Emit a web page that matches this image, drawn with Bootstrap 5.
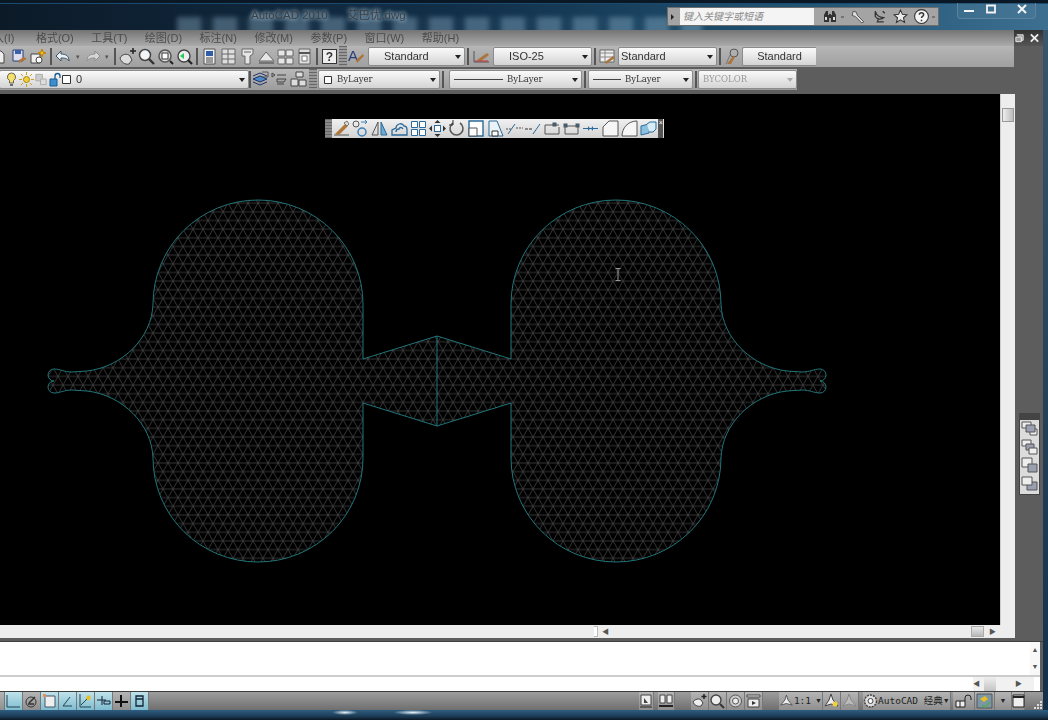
<!DOCTYPE html>
<html lang="en">
<head>
<meta charset="UTF-8">
<title>AutoCAD 2010</title>
<link href="https://cdn.jsdelivr.net/npm/bootstrap@5.3.0/dist/css/bootstrap.min.css" rel="stylesheet">
<style>
html,body{margin:0;height:720px;overflow:hidden;background:#10263a}
svg{display:block}
.app{width:1048px;height:720px;font-family:"Liberation Sans","Noto Sans CJK SC",sans-serif;filter:blur(.35px)}
.glass{height:30px;background:linear-gradient(90deg,#0c1a28 0,#12304a 45%,#1f5272 75%,#3d6f90 100%);border-top:3px solid #0a1724;box-shadow:inset 0 1px 0 #1c4a6c}
.ghost{left:177px;top:14px;width:525px;height:20px;background:repeating-linear-gradient(90deg,rgba(170,205,228,.34) 0 24px,rgba(170,205,228,.05) 24px 36px);filter:blur(2.5px)}
.doc-title{left:251px;top:4px;font-size:11.5px;color:#3a4046;text-shadow:0 0 4px #a8c0d0,0 0 4px #a8c0d0;white-space:pre}
.infobar{left:667px;top:4px;width:272px;height:19px;background:#a4a4a4;border:1px solid #6d6d6d}
.infobar svg{flex:none}
.infofield{width:149px;height:17px;background:#f4f4f4;font-size:10px;font-style:italic;color:#8b8b8b;line-height:17px;padding-left:3px;margin-left:4px}
.winbtns{left:957px;top:-3px;width:79px;height:19px;border:1px solid #5d829b;border-top:0;border-radius:0 0 4px 4px;background:rgba(150,185,205,.1)}
.win-a{margin-left:5px}
.win-b{margin-left:10px}
.win-c{margin-left:19px}
.shell{height:680px}
.stage{width:1043px}
.rim{width:5px;background:linear-gradient(#37566b,#12304a)}
.menubar{height:16px;background:linear-gradient(#747474,#ababab);font-size:11px;line-height:16px;color:#4c4c4c;gap:17.5px;white-space:nowrap}
.menu-first{margin-left:-7px;margin-right:4px}
.tools{height:21px;background:linear-gradient(#b6b6b6,#a0a0a0);white-space:nowrap}
.toolsb{height:27px;background:#5d5d5d;padding:2px 0 4px}
.rowfill{height:21px;background:linear-gradient(#b8b8b8,#9c9c9c)}
.slot{width:19px;height:19px;flex:none}
.slot-cut{margin-left:-9px}
.slot-n{width:10px;height:19px;flex:none;font-size:7px;line-height:19px;color:#555;text-align:center}
.sep{width:2px;height:17px;flex:none;background:#eee;border:0 solid #555;border-width:0 1px;margin:0 2px}
.sep-tight{margin:0}
.grip{width:8px;height:21px;flex:none;background:repeating-linear-gradient(#666 0 1px,#999 1px 3px)}
.grip-b{margin:0 1px}
.gap-l2{margin-left:2px}
.gap-l1{margin-left:1px}
.combo{height:19px;flex:none;background:linear-gradient(#fafafa,#d4d4d4);border:1px solid #8b8b8b;border-radius:2px;font-size:11px;line-height:17px;color:#333;overflow:hidden}
.combo i{flex:none;width:0;height:0;border:3.5px solid transparent;border-top:4px solid #222;border-bottom:0;margin-right:3px}
.pad-16{padding-left:15px}
.pad-2{padding-left:2px}
.cw-97{width:97px}
.cw-99{width:99px}
.cw-74{width:74px;border-right:0;border-radius:2px 0 0 2px}
.cw-250{width:250px;margin-left:-1px}
.cw-122{width:122px}
.cw-133{width:133px;margin-left:3px}
.cw-105{width:105px}
.cw-off{width:99px;margin-left:-1px;color:#999}
.cw-off i{border-top-color:#aaa}
.serif{font-family:"DejaVu Serif","Noto Sans CJK SC",serif;font-size:8.5px}
.fade{left:816px;top:0;width:198px;height:37px}
.fade-a{height:16px;background:linear-gradient(90deg,#6a6a6a,#333 18%,#3a3a3a)}
.fade-b{height:21px;background:linear-gradient(90deg,#bcbcbc,#5d5d5d 40%)}
.shade-r{left:1014px;top:0;width:29px;height:16px;background:linear-gradient(#333,#555);padding-right:3px}
.shade-s{left:1014px;top:16px;width:29px;height:48px;background:#5d5d5d}
.main-h{height:531px}
.cad{width:1000px;background:#000}
.vbar{width:15px;background:#ededed;border-left:1px solid #ccc}
.side{width:28px;background:#5d5d5d}
.vthumb{width:12px;height:14px;margin:14px auto 0;background:linear-gradient(90deg,#eee,#bbb);border:1px solid #999}
.float-bar{left:325px;top:25px;width:339px;height:19px;background:linear-gradient(#f0f0f0,#d4d4d4)}
.float-grip{width:7px;background:repeating-linear-gradient(#666 0 1px,#888 1px 3px)}
.float-x{width:5px;background:#555;color:#fff;font-size:7px;line-height:8px}
.float-bar .slot{width:19.2px}
.hbar{height:13px;width:1015px;background:#ededed}
.hgap{width:594px}
.hthumb{width:13px;height:11px;background:linear-gradient(#e8e8e8,#b8b8b8);border:1px solid #aaa}
.tabcap{width:4px;height:11px;background:#fff;border:1px solid #bbb;border-left:0}
.tri{font-size:7px;color:#555;line-height:13px}
.tri-end{margin:0 19px 0 5px}
.divline{height:4px;background:#5d5d5d;border-bottom:1px solid #3f3f3f;width:1043px}
.cmd{height:33px;background:#fff;border-right:3px solid #5d5d5d}
.cmdscroll{width:10px;background:#f8f8f8;font-size:7px;color:#555;line-height:16px}
.cmdline{height:2px;background:#ccc;border-right:3px solid #5d5d5d}
.cmdin{height:14px;background:#fff;border-right:3px solid #5d5d5d}
.cmdtrack{width:61px;margin-right:6px;background:#f1f1f1;font-size:7px;color:#555;line-height:14px;padding:0 12px 0 0}
.cmdthumb{width:12px;height:14px;margin:0 auto 0 4px;background:linear-gradient(#eee,#c4c4c4)}
.stat{height:19px;background:linear-gradient(#9d9d9d,#6f6f6f);border-top:1px solid #3c3c3c;font-size:10px;color:#222;white-space:nowrap}
.sb{width:18px;height:18px;flex:none;background:linear-gradient(#b5b5b5,#8f8f8f);border-right:1px solid #777}
.sb-on{background:linear-gradient(#bfe2ea,#7fbccf)}
.sb-5{width:5px}
.sb-13{width:13px}
.sb-15{width:15px}
.sb-17{width:17px}
.sb-20{width:20px}
.sb-22{width:22px;margin-left:2px}
.sb-44{width:44px;margin-left:16px}
.sb-88{width:88px;margin-left:4px}
.gap-16{margin-left:16px}
.mini{font-size:7px}
.grippy{width:18px;height:18px}
.mono{font-family:"DejaVu Sans Mono","Noto Sans CJK SC",monospace;font-size:9.5px;color:#1e1e1e}
.floor{height:10px;background:linear-gradient(#2e5d80,#1d3d58 60%,#0a1724);width:1048px}
.glare{left:332px;top:0;width:26px;height:5px;background:radial-gradient(ellipse,#e6f2f8 0,rgba(230,242,248,0) 70%)}
.glare-b{left:393px;width:40px}
.order{margin-top:319px;margin-left:4px;width:21px;height:82px;background:#dcdcdc;border:1px solid #444;border-top:7px solid #444}
.order .slot{height:18px}
</style>
</head>
<body>
<div class="app d-flex flex-column">
  <!-- title bar -->
  <div class="glass position-relative overflow-hidden">
    <div class="ghost position-absolute"></div>
    <div class="doc-title position-absolute">AutoCAD 2010      艾巴优.dwg</div>
    <div class="infobar position-absolute d-flex align-items-center">
      <svg width="8" height="12" viewBox="0 0 8 12"><path d="M3 3l3 3-3 3z" fill="#222"/></svg>
      <div class="infofield">键入关键字或短语</div>
      <svg class="ms-2" width="16" height="16" viewBox="0 0 16 16" fill="#333"><path d="M2 6l2-4h2v4h1v-1h2v1h1V2h2l2 4v7h-5V9H7v4H2z"/><path d="M3 8h2v3H3zM11 8h2v3h-2z" fill="#ddd"/></svg>
      <svg width="8" height="8" viewBox="0 0 8 8"><path d="M3 4h3" stroke="#444"/></svg>
      <svg class="ms-1" width="17" height="17" viewBox="0 0 16 16"><path d="M3 3l3 1 1 3 6 6-2 1-6-6-3-1z" fill="#ddd" stroke="#444" stroke-width=".8"/></svg>
      <svg class="ms-1" width="17" height="17" viewBox="0 0 16 16" fill="none" stroke="#333" stroke-width="1.2"><path d="M4 3c1 4 4 6 8 6-2 2-6 2-8-1zM7 10l-1 3h6M11 3l2 2"/></svg>
      <svg class="ms-1" width="17" height="17" viewBox="0 0 16 16"><path d="M8 2l1.800 4 4.200.4-3.200 2.800 1 4.300L8 11.200 4.200 13.500l1-4.300L2 6.400 6.200 6z" fill="#ececec" stroke="#333"/></svg>
      <svg class="ms-1" width="17" height="17" viewBox="0 0 16 16"><circle cx="8" cy="8" r="6.500" fill="#f4f4f4" stroke="#333"/><path d="M6 6.300c0-2.300 4-2.300 4 0 0 1.600-2 1.500-2 3M8 11v1.400" fill="none" stroke="#333" stroke-width="1.400"/></svg>
      <svg width="8" height="8" viewBox="0 0 8 8"><path d="M2 4h3" stroke="#444"/></svg>
    </div>
    <div class="winbtns position-absolute d-flex align-items-center">
      <svg class="win-a" width="12" height="10" viewBox="0 0 12 10"><path d="M1 6h10v2H1z" fill="#f4f4f4"/></svg>
      <svg class="win-b" width="12" height="10" viewBox="0 0 12 10"><path d="M2 1.500h8v7H2z" fill="none" stroke="#f4f4f4" stroke-width="1.800"/></svg>
      <svg class="win-c" width="12" height="10" viewBox="0 0 12 10"><path d="M2 1l8 8M10 1L2 9" stroke="#f4f4f4" stroke-width="2"/></svg>
    </div>
  </div>

  <div class="shell d-flex">
    <div class="stage d-flex flex-column">
      <div class="position-relative">
        <!-- menu -->
        <div class="menubar d-flex overflow-hidden">
          <span class="menu-first">入(I)</span><span>格式(O)</span><span>工具(T)</span><span>绘图(D)</span><span>标注(N)</span><span>修改(M)</span><span>参数(P)</span><span>窗口(W)</span><span>帮助(H)</span>
        </div>
        <!-- standard + styles toolbar -->
        <div class="tools d-flex align-items-center overflow-hidden">
          <div class="slot slot-cut"><svg width="19" height="19" viewBox="0 0 19 19"><path d="M2 4h8l3 3v9H2z" fill="#eee" stroke="#444"/></svg></div>
          <div class="slot"><svg width="19" height="19" viewBox="0 0 19 19"><path d="M3 3h10v11H3z" fill="#dde" stroke="#26407a"/><path d="M5 3h6v4H5z" fill="#3b62a8"/><path d="M9 16l8-4-3-2-5 3z" fill="#b0763a"/></svg></div>
          <div class="slot"><svg width="19" height="19" viewBox="0 0 19 19" fill="none" stroke="#444"><path d="M2 7h9v9H2z" fill="#eee"/><circle cx="10" cy="13" r="3" fill="#fff"/><path d="M13 2l1 3 3 1-3 1-1 3-1-3-3-1 3-1z" fill="#f0c020" stroke="#c08000"/></svg></div>
          <div class="sep"></div>
          <div class="slot"><svg width="19" height="19" viewBox="0 0 19 19"><path d="M7 4L2 9l5 5v-3c3 0 6 0 8 3 0-5-3-7-8-7z" fill="#e8eef4" stroke="#3a5266"/></svg></div>
          <div class="slot-n">▾</div>
          <div class="slot"><svg width="19" height="19" viewBox="0 0 19 19"><path d="M12 4l5 5-5 5v-3c-3 0-6 0-8 3 0-5 3-7 8-7z" fill="#d6d6d6" stroke="#8b8b8b"/></svg></div>
          <div class="slot-n">▾</div>
          <div class="sep"></div>
          <div class="slot"><svg width="19" height="19" viewBox="0 0 19 19"><path d="M2 11c2-4 7-5 10-2l2 4-3 4c-4 1-8-2-9-6z" fill="#ddd" stroke="#444"/><path d="M15 1v6M12 4h6" stroke="#222" stroke-width="1.500"/></svg></div>
          <div class="slot"><svg width="19" height="19" viewBox="0 0 19 19"><circle cx="8" cy="8" r="5.500" fill="#f1f5f8" stroke="#444" stroke-width="1.500"/><path d="M12 12l5 5" stroke="#333" stroke-width="2.400"/></svg></div>
          <div class="slot"><svg width="19" height="19" viewBox="0 0 19 19"><circle cx="9" cy="9" r="6" fill="#ddd" stroke="#555" stroke-width="1.500"/><rect x="6" y="6" width="6" height="6" fill="#fff" stroke="#333"/><path d="M14 14l3 3" stroke="#222" stroke-width="2"/></svg></div>
          <div class="slot"><svg width="19" height="19" viewBox="0 0 19 19"><circle cx="9" cy="9" r="6" fill="#eee" stroke="#444" stroke-width="1.400"/><path d="M13 13l4 4" stroke="#222" stroke-width="2.200"/><path d="M5 9l4-3v6z" fill="#2c5"/></svg></div>
          <div class="sep"></div>
          <div class="slot"><svg width="19" height="19" viewBox="0 0 19 19"><path d="M4 2h11v15H4z" fill="#eee" stroke="#555"/><path d="M6 4h7v5H6z" fill="#2d5da8"/><path d="M6 11h7M6 13h7M6 15h7" stroke="#444"/></svg></div>
          <div class="slot"><svg width="19" height="19" viewBox="0 0 19 19"><path d="M3 2h13v15H3z" fill="#ddd" stroke="#666"/><path d="M3 7h13M3 12h13M9 2v15" stroke="#666"/></svg></div>
          <div class="slot"><svg width="19" height="19" viewBox="0 0 19 19"><path d="M4 2h11v5l-3 2v8H7V9H4z" fill="#e6e6e6" stroke="#666"/><path d="M6 5h7" stroke="#666"/></svg></div>
          <div class="slot"><svg width="19" height="19" viewBox="0 0 19 19"><path d="M2 14l7-9 8 9z" fill="#e6e6e6" stroke="#666"/><path d="M2 16h15" stroke="#666" stroke-width="1.500"/></svg></div>
          <div class="slot"><svg width="19" height="19" viewBox="0 0 19 19" fill="#e6e6e6" stroke="#666"><path d="M2 3h7v6H2zM10 3h7v6h-7zM2 11h7v6H2zM10 11h7v6h-7z"/></svg></div>
          <div class="slot"><svg width="19" height="19" viewBox="0 0 19 19"><path d="M4 2h11v15H4z" fill="#ddd" stroke="#666"/><path d="M4 6h11" stroke="#555" stroke-width="2"/><path d="M7 9h5v5H7z" fill="#fff" stroke="#777"/></svg></div>
          <div class="sep"></div>
          <div class="slot"><svg width="19" height="19" viewBox="0 0 19 19"><rect x="2.500" y="2.500" width="14" height="14" fill="#eee" stroke="#333"/><text x="9.500" y="14" text-anchor="middle" font-size="12" font-family="Liberation Sans" font-weight="700" fill="#333">?</text></svg></div>
          <div class="grip"></div>
          <div class="slot"><svg width="19" height="19" viewBox="0 0 19 19"><text x="1" y="14" font-size="15" font-family="Liberation Sans" fill="#2a3f7a">A</text><path d="M10 16l7-7-1-2-7 6z" fill="#a9743d"/></svg></div>
          <div class="combo cw-97 gap-l2 d-flex align-items-center"><span class="flex-grow-1 pad-16">Standard</span><i></i></div>
          <div class="sep"></div>
          <div class="slot gap-l1"><svg width="19" height="19" viewBox="0 0 19 19"><path d="M2 4v11h15" fill="none" stroke="#555"/><path d="M5 13l10-7 2 2-8 6z" fill="#a9743d"/><path d="M3 14h13" stroke="#c33"/></svg></div>
          <div class="combo cw-99 gap-l2 d-flex align-items-center"><span class="flex-grow-1 pad-16">ISO-25</span><i></i></div>
          <div class="sep"></div>
          <div class="slot"><svg width="19" height="19" viewBox="0 0 19 19"><path d="M2 3h14v12H2z" fill="#eee" stroke="#666"/><path d="M2 6h14M7 3v12M2 10h14" stroke="#888"/><path d="M8 17l9-6-2-2-8 6z" fill="#a9743d"/></svg></div>
          <div class="combo cw-99 gap-l1 d-flex align-items-center"><span class="flex-grow-1 pad-2">Standard</span><i></i></div>
          <div class="sep"></div>
          <div class="slot"><svg width="19" height="19" viewBox="0 0 19 19"><circle cx="11" cy="6" r="4" fill="none" stroke="#555"/><path d="M4 17l6-8 2 1-4 7z" fill="#a9743d"/><path d="M3 17l4-9" stroke="#777"/></svg></div>
          <div class="combo cw-74 text-center">Standard</div>
        </div>
        <div class="fade position-absolute d-flex flex-column"><div class="fade-a"></div><div class="fade-b"></div></div>
        <div class="shade-r position-absolute d-flex justify-content-end align-items-center">
          <svg width="12" height="12" viewBox="0 0 12 12"><path d="M3 2.500h7v6H8M2 5h6v5H2z" fill="#999" stroke="#eee"/></svg>
          <svg class="ms-1" width="12" height="12" viewBox="0 0 12 12"><path d="M2 2l8 8M10 2l-8 8" stroke="#eee" stroke-width="2"/></svg>
        </div>
        <div class="shade-s position-absolute"></div>
        <!-- layer toolbar -->
        <div class="toolsb d-flex">
          <div class="rowfill d-flex align-items-center">
            <div class="combo cw-250 d-flex align-items-center">
              <svg class="ms-1" width="15" height="15" viewBox="0 0 15 15"><path d="M7.500 1a4 4 0 0 0-2 7.500V11h4V8.500a4 4 0 0 0-2-7.500z" fill="#f4e06a" stroke="#665"/><path d="M6 13h3" stroke="#444" stroke-width="1.500"/></svg>
              <svg width="15" height="15" viewBox="0 0 15 15"><circle cx="7.500" cy="7.500" r="3" fill="#f2d040" stroke="#a80"/><path d="M7.500 0v3M7.500 12v3M0 7.500h3M12 7.500h3M2 2l2 2M11 11l2 2M13 2l-2 2M4 11l-2 2" stroke="#c8a020"/></svg>
              <svg width="14" height="15" viewBox="0 0 15 15"><path d="M2 2h7v7H2z" fill="#ccc" stroke="#aaa"/><path d="M7 7h6v6H7z" fill="#ddd" stroke="#aaa"/></svg>
              <svg width="13" height="15" viewBox="0 0 13 15"><path d="M2 7h7v7H2z" fill="#3a8fd0" stroke="#1a5a90"/><path d="M7 7V4a2.500 2.500 0 0 1 5 0v2" fill="none" stroke="#1a5a90" stroke-width="1.300"/></svg>
              <svg width="11" height="15" viewBox="0 0 11 15"><path d="M1.500 3.500h8v8h-8z" fill="#fff" stroke="#333"/></svg>
              <span class="flex-grow-1 ms-1">0</span><i></i>
            </div>
            <div class="sep sep-tight"></div>
            <div class="slot"><svg width="19" height="19" viewBox="0 0 19 19"><path d="M2 9l7-3 7 3-7 3z" fill="#4a88c8" stroke="#236"/><path d="M2 12l7 3 7-3M2 6l7-3 7 3" fill="none" stroke="#236"/><path d="M11 2h6v5h-6" fill="none" stroke="#555"/></svg></div>
            <div class="slot"><svg width="19" height="19" viewBox="0 0 19 19" fill="none" stroke="#444"><path d="M2 3l3 2-3 2zM7 5h9M7 9h9l-2 3H7zM7 14h7"/></svg></div>
            <div class="slot"><svg width="19" height="19" viewBox="0 0 19 19" fill="#ddd" stroke="#444"><path d="M7 2h7v5H7zM2 9h7v7H2zM10 10h7v6h-7z"/></svg></div>
            <div class="grip grip-b"></div>
          </div>
          <div class="rowfill d-flex align-items-center">
            <div class="combo cw-122 serif d-flex align-items-center"><svg class="ms-1 flex-shrink-0" width="10" height="10" viewBox="0 0 10 10"><path d="M1.500 1.500h7v7h-7z" fill="#fff" stroke="#333"/></svg><span class="flex-grow-1 ms-1">ByLayer</span><i></i></div>
            <div class="sep"></div>
            <div class="combo cw-133 serif d-flex align-items-center"><svg class="ms-1" width="49" height="5"><path d="M0 2.500h49" stroke="#444"/></svg><span class="flex-grow-1 ps-1">ByLayer</span><i></i></div>
            <div class="sep"></div>
            <div class="combo cw-105 serif d-flex align-items-center"><svg class="ms-1" width="28" height="5"><path d="M0 2.500h28" stroke="#444"/></svg><span class="flex-grow-1 ps-1">ByLayer</span><i></i></div>
            <div class="sep"></div>
            <div class="combo cw-off serif d-flex align-items-center"><span class="flex-grow-1 ps-1">BYCOLOR</span><i></i></div>
          </div>
        </div>
      </div>

      <div class="d-flex flex-grow-1">
        <div class="d-flex flex-column">
          <div class="d-flex main-h">
            <div class="cad position-relative">
              <svg width="1000" height="531" viewBox="0 94 1000 531" class="d-block">
                <defs>
                  <pattern id="ansi" width="10" height="17.32" patternUnits="userSpaceOnUse" patternTransform="translate(3 4)">
                    <path d="M0 0H10M0 8.660H10M0 17.320H10M0 0L5 8.660L10 0M0 17.320L5 8.660L10 17.320" fill="none" stroke="#4a4a4a" stroke-width=".7"/>
                  </pattern>
                </defs>
                <path d="M437 336L363 359V304A105 104 0 0 0 153 304C152 338 122 367 87 371L72 372C64 372 60 369 54 369A6 6 0 0 0 54 381A6 6 0 0 0 54 393C60 393 64 390 72 390L87 391C122 395 152 424 153 458A105 104 0 0 0 363 458V403L437 426L511 403V458A105 104 0 0 0 721 458C722 424 752 395 787 391L802 390C810 390 814 393 820 393A6 6 0 0 0 820 381A6 6 0 0 0 820 369C814 369 810 372 802 372L787 371C752 367 722 338 721 304A105 104 0 0 0 511 304V359Z" fill="url(#ansi)" stroke="#217478" stroke-width="1"/>
                <path d="M437 336V426" stroke="#217478"/>
                <path d="M615.500 268.500h5M615.500 280.500h5M618 268.500v12" stroke="#999" fill="none"/>
              </svg>
              <!-- floating modify toolbar -->
              <div class="float-bar position-absolute d-flex">
                <div class="float-grip"></div>
                <div class="slot"><svg width="19" height="19" viewBox="0 0 19 19"><path d="M2 16h15" stroke="#555"/><path d="M3 15l10-10 3 2-9 9z" fill="#b0783a"/><path d="M12 4l3-2 2 3-2 2z" fill="#ddd" stroke="#777"/></svg></div>
                <div class="slot"><svg width="19" height="19" viewBox="0 0 19 19" fill="none" stroke="#555"><circle cx="5" cy="5" r="3"/><circle cx="11" cy="13" r="4" stroke="#3b7fb8" stroke-width="1.500"/><path d="M10 3h6M14 1l2 2-2 2" stroke="#3b7fb8"/></svg></div>
                <div class="slot"><svg width="19" height="19" viewBox="0 0 19 19"><path d="M8 3v13H2z" fill="none" stroke="#555"/><path d="M11 3v13h6z" fill="#6ea8d0" stroke="#2b6a9a"/></svg></div>
                <div class="slot"><svg width="19" height="19" viewBox="0 0 19 19" fill="none" stroke="#2b6a9a" stroke-width="1.300"><path d="M2 16v-5l4-2c0-4 6-6 8-2 3 0 3 4 3 4v5z"/><path d="M6 13c0-2 1-3 3-3 0-2 3-2 4 0"/></svg></div>
                <div class="slot"><svg width="19" height="19" viewBox="0 0 19 19" fill="#fff" stroke="#2b6a9a"><path d="M2.500 2.500h6v6h-6zM10.500 2.500h6v6h-6zM2.500 10.500h6v6h-6zM10.500 10.500h6v6h-6z"/></svg></div>
                <div class="slot"><svg width="19" height="19" viewBox="0 0 19 19" fill="#333"><path d="M9.500 1l3 3h-6zM9.500 18l3-3h-6zM1 9.500l3-3v6zM18 9.500l-3-3v6z"/><rect x="6.500" y="6.500" width="6" height="6" fill="#fff" stroke="#2b6a9a"/></svg></div>
                <div class="slot"><svg width="19" height="19" viewBox="0 0 19 19" fill="none"><path d="M6 4a6.500 6.500 0 1 0 7 0" stroke="#555" stroke-width="1.500"/><path d="M6 1v5H2" stroke="#333"/></svg></div>
                <div class="slot"><svg width="19" height="19" viewBox="0 0 19 19"><path d="M3 2h14v15H3z" fill="#fff" stroke="#2b6a9a" stroke-width="1.400"/><path d="M3 9h8v8H3z" fill="#fff" stroke="#555"/></svg></div>
                <div class="slot"><svg width="19" height="19" viewBox="0 0 19 19"><path d="M3 2h8l6 15H3z" fill="#eaf3f8" stroke="#2b6a9a"/><path d="M6 12h6v5H6z" fill="#fff" stroke="#333"/></svg></div>
                <div class="slot"><svg width="19" height="19" viewBox="0 0 19 19" stroke="#2b6a9a"><path d="M3 15l7-10" /><path d="M11 9h7M1 10h6" stroke="#555" stroke-dasharray="2 1"/></svg></div>
                <div class="slot"><svg width="19" height="19" viewBox="0 0 19 19" stroke="#2b6a9a"><path d="M9 15l7-10"/><path d="M1 10h8" stroke="#333" stroke-dasharray="3 1"/></svg></div>
                <div class="slot"><svg width="19" height="19" viewBox="0 0 19 19" fill="none" stroke="#555"><path d="M2 6h14M2 6v9h14V8"/><rect x="10" y="4" width="3" height="3" fill="#2b6a9a"/></svg></div>
                <div class="slot"><svg width="19" height="19" viewBox="0 0 19 19" fill="none" stroke="#555"><path d="M3 7h13v8H3z"/><rect x="2" y="5" width="3" height="3" fill="#2b6a9a"/><rect x="14" y="5" width="3" height="3" fill="#2b6a9a"/></svg></div>
                <div class="slot"><svg width="19" height="19" viewBox="0 0 19 19" fill="#2b6a9a"><path d="M2 9h15v1H2z"/><path d="M7 7l2 2.500-2 2.500zM12 7l-2 2.500 2 2.500z"/></svg></div>
                <div class="slot"><svg width="19" height="19" viewBox="0 0 19 19"><path d="M2 17V8l6-6h9v15z" fill="#f6f6f6" stroke="#555"/></svg></div>
                <div class="slot"><svg width="19" height="19" viewBox="0 0 19 19"><path d="M2 17c0-8 6-15 15-15v15z" fill="#f6f6f6" stroke="#555"/></svg></div>
                <div class="slot"><svg width="19" height="19" viewBox="0 0 19 19"><path d="M2 7l8-2v9l-8 2z" fill="#8cc0e0" stroke="#2b6a9a"/><path d="M8 5l3-2h6v7l-3 3h-4" fill="#d8ecf6" stroke="#2b6a9a"/></svg></div>
                <div class="float-x text-center">×</div>
              </div>
            </div>
            <div class="vbar"><div class="vthumb"></div></div>
          </div>
          <div class="hbar d-flex align-items-center">
            <div class="hgap"></div><div class="tabcap"></div>
            <span class="tri ms-1">◀</span>
            <div class="flex-grow-1"></div>
            <div class="hthumb"></div>
            <span class="tri tri-end">▶</span>
          </div>
        </div>
        <div class="side"><div class="order d-flex flex-column align-items-center">
          <div class="slot"><svg width="19" height="18" viewBox="0 0 19 18" fill="#eee" stroke="#555"><path d="M10 9h7v6h-7z"/><path d="M2 2h9v6H2z"/><path d="M6 5h9v7H6z" fill="#9aa0b0"/></svg></div>
          <div class="slot"><svg width="19" height="18" viewBox="0 0 19 18" fill="#eee" stroke="#555"><path d="M2 2h9v6H2z"/><path d="M6 6h8v6H6z" fill="#9aa0b0"/><path d="M9 10h8v6H9z"/></svg></div>
          <div class="slot"><svg width="19" height="18" viewBox="0 0 19 18" fill="#eee" stroke="#555"><path d="M2 2h10v9H2z"/><path d="M8 8h9v8H8z" fill="#9aa0b0"/></svg></div>
          <div class="slot"><svg width="19" height="18" viewBox="0 0 19 18" fill="#eee" stroke="#555"><path d="M7 8h10v8H7z" fill="#9aa0b0"/><path d="M2 3h10v8H2z"/></svg></div>
        </div></div>
      </div>
      <div class="divline"></div>
      <!-- command window -->
      <div class="cmd d-flex justify-content-end">
        <div class="cmdscroll text-center d-flex flex-column justify-content-between"><span>▲</span><span>▼</span></div>
      </div>
      <div class="cmdline"></div>
      <div class="cmdin d-flex justify-content-end">
        <div class="cmdtrack d-flex align-items-center"><span>◀</span><div class="cmdthumb"></div><span>▶</span></div>
      </div>
      <!-- status bar -->
      <div class="stat d-flex align-items-start">
        <div class="sb sb-5"></div>
        <div class="sb sb-on"><svg width="17" height="18" viewBox="0 0 17 18"><path d="M2 3v12h13" fill="none" stroke="#245"/></svg></div>
        <div class="sb"><svg width="17" height="18" viewBox="0 0 17 18" fill="none" stroke="#333"><circle cx="8" cy="10" r="5"/><path d="M6 11l6-6M5 12h6" stroke-width="1.500"/></svg></div>
        <div class="sb sb-on"><svg width="17" height="18" viewBox="0 0 17 18"><path d="M4 4h10v11H4z" fill="#eee" stroke="#456"/><path d="M2 2h3v3H2z" fill="#e8905a"/></svg></div>
        <div class="sb sb-on"><svg width="17" height="18" viewBox="0 0 17 18" fill="none" stroke="#245"><path d="M11 5l-7 9h9"/></svg></div>
        <div class="sb sb-on"><svg width="17" height="18" viewBox="0 0 17 18"><path d="M3 2v13h11M4 13l8-8" fill="none" stroke="#245"/><path d="M11 3l2 1 1 2-3 3-2-3z" fill="#e8c020"/></svg></div>
        <div class="sb sb-on"><svg width="17" height="18" viewBox="0 0 17 18" stroke="#123" fill="none"><path d="M7 4v9M2 8h9"/><path d="M9 9h6v3H9z"/></svg></div>
        <div class="sb"><svg width="17" height="18" viewBox="0 0 17 18" stroke="#111" stroke-width="2" fill="none"><path d="M8 3v12M2 10h13"/></svg></div>
        <div class="sb sb-on"><svg width="17" height="18" viewBox="0 0 17 18" stroke="#123" fill="none" stroke-width="1.300"><path d="M5 4h7v10H5zM5 7h7"/></svg></div>
        <div class="flex-grow-1"></div>
        <div class="sb sb-15"><svg width="14" height="18" viewBox="0 0 14 18"><path d="M2 3h10v10H2z" fill="#eee" stroke="#444"/><path d="M5 6v5h4z" fill="#444"/><path d="M1 15h12" stroke="#222"/></svg></div>
        <div class="sb sb-17 ms-1"><svg width="16" height="18" viewBox="0 0 16 18"><path d="M2 3h5v8H2zM9 3h5v8H9z" fill="#eee" stroke="#444"/><path d="M1 14h14" stroke="#222" stroke-width="2"/></svg></div>
        <div class="sb gap-16"><svg width="17" height="18" viewBox="0 0 17 18"><path d="M2 10c2-3 6-4 8-2l2 3-2 3c-3 1-7-1-8-4z" fill="#eee" stroke="#444"/><path d="M13 2v5M10.500 4.500h5" stroke="#222" stroke-width="1.500"/></svg></div>
        <div class="sb"><svg width="17" height="18" viewBox="0 0 17 18"><circle cx="7" cy="8" r="5" fill="#eee" stroke="#444" stroke-width="1.400"/><path d="M11 12l4 4" stroke="#333" stroke-width="2"/></svg></div>
        <div class="sb"><svg width="17" height="18" viewBox="0 0 17 18"><circle cx="8.500" cy="9" r="6" fill="#ccc" stroke="#555"/><circle cx="8.500" cy="9" r="3" fill="#eee" stroke="#555"/></svg></div>
        <div class="sb"><svg width="17" height="18" viewBox="0 0 17 18"><path d="M2 3h13v2H2zM3 7h11v8H3z" fill="#eee" stroke="#444"/><path d="M7 9l4 2-4 2z" fill="#333"/></svg></div>
        <div class="sb sb-44 d-flex align-items-center"><svg width="18" height="18" viewBox="0 0 18 18" fill="#eee" stroke="#444"><path d="M9 2l2 6 5 6-7-2-7 2 5-6z"/></svg><span class="mono">1:1</span><span class="ms-1 mini">▼</span></div>
        <div class="sb"><svg width="17" height="18" viewBox="0 0 17 18"><path d="M8 2l2 6 5 6-7-2-6 2 4-6z" fill="#eee" stroke="#444"/><circle cx="12" cy="12" r="2.500" fill="#f2d040"/></svg></div>
        <div class="sb"><svg width="17" height="18" viewBox="0 0 17 18"><path d="M8 2l2 6 5 6-7-2-6 2 4-6z" fill="#bbb" stroke="#888"/></svg></div>
        <div class="sb sb-88 d-flex align-items-center"><svg class="flex-shrink-0" width="15" height="18" viewBox="0 0 15 18" fill="#ddd" stroke="#444"><circle cx="7.500" cy="9" r="6" stroke-dasharray="2 1" stroke-width="1.500"/><circle cx="7.500" cy="9" r="2.500" fill="#fff"/></svg><span class="mono">AutoCAD 经典</span><span class="mini">▼</span></div>
        <div class="sb sb-22"><svg width="21" height="18" viewBox="0 0 21 18" fill="none" stroke="#222"><path d="M3 9h9v6H3z" fill="#eee"/><path d="M7 9v6M12 9V6a3 3 0 0 1 6 0v2"/></svg></div>
        <div class="sb sb-20"><svg width="19" height="18" viewBox="0 0 19 18"><path d="M2 2h15v14H2z" fill="#7c96a8" stroke="#555"/><path d="M5 7l5-3 3 3-4 3z" fill="#e8c020"/><path d="M7 13l3 2 5-5" stroke="#5a5" stroke-width="1.500" fill="none"/></svg></div>
        <div class="sb sb-17 d-flex align-items-center justify-content-center"><span class="mini">▼</span></div>
        <div class="sb sb-13"><svg width="13" height="18" viewBox="0 0 13 18"><path d="M1 3h11v12H1z" fill="#eee" stroke="#222"/><path d="M1 5h11" stroke="#222" stroke-width="2"/></svg></div>
        <div class="grippy d-flex justify-content-end align-items-end"><svg width="10" height="10" viewBox="0 0 10 10" fill="#ddd"><path d="M7 1h2v2H7zM4 4h2v2H4zM7 4h2v2H7zM1 7h2v2H1zM4 7h2v2H4zM7 7h2v2H7z"/></svg></div>
      </div>
    </div>
    <div class="rim"></div>
  </div>
  <div class="floor position-relative overflow-hidden flex-shrink-0">
    <div class="glare position-absolute"></div>
    <div class="glare glare-b position-absolute"></div>
  </div>
</div>
<script src="https://cdn.jsdelivr.net/npm/bootstrap@5.3.0/dist/js/bootstrap.bundle.min.js"></script>
</body>
</html>
